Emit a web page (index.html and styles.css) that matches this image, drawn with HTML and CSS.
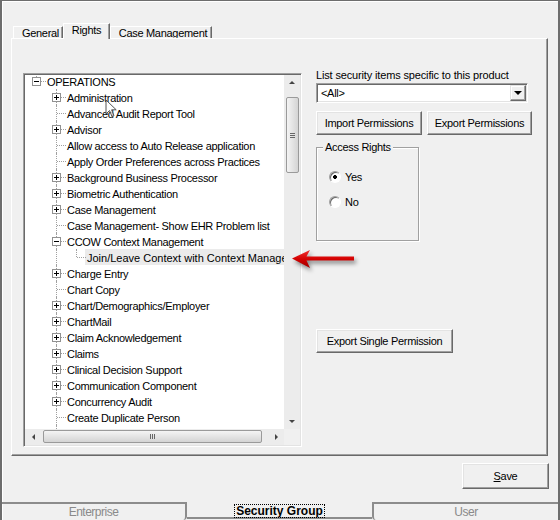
FILE: index.html
```html
<!DOCTYPE html>
<html lang="en">
<head>
    <meta charset="UTF-8">
    <title>Security Group</title>
    <link rel="stylesheet" href="styles.css">
</head>
<body>
    <div class="window">
        <div class="tabs">
            <div class="tab tab-general">General</div>
            <div class="tab tab-rights active">Rights</div>
            <div class="tab tab-case">Case Management</div>
        </div>

        <div class="panel">
            <div class="tree">
                <div class="viewport">
                    <div class="row first"><span class="g end"><i class="box"></i></span><span class="txt">OPERATIONS</span></div>
                    <div class="row"><span class="g"></span><span class="g tee"><i class="box plus"></i></span><span class="txt">Administration</span></div>
                    <div class="row"><span class="g"></span><span class="g tee"></span><span class="txt">Advanced Audit Report Tool</span></div>
                    <div class="row"><span class="g"></span><span class="g tee"><i class="box plus"></i></span><span class="txt">Advisor</span></div>
                    <div class="row"><span class="g"></span><span class="g tee"></span><span class="txt">Allow access to Auto Release application</span></div>
                    <div class="row"><span class="g"></span><span class="g tee"></span><span class="txt">Apply Order Preferences across Practices</span></div>
                    <div class="row"><span class="g"></span><span class="g tee"><i class="box plus"></i></span><span class="txt">Background Business Processor</span></div>
                    <div class="row"><span class="g"></span><span class="g tee"><i class="box plus"></i></span><span class="txt">Biometric Authentication</span></div>
                    <div class="row"><span class="g"></span><span class="g tee"><i class="box plus"></i></span><span class="txt">Case Management</span></div>
                    <div class="row"><span class="g"></span><span class="g tee"></span><span class="txt">Case Management- Show EHR Problem list</span></div>
                    <div class="row"><span class="g"></span><span class="g tee"><i class="box"></i></span><span class="txt">CCOW Context Management</span></div>
                    <div class="row"><span class="g"></span><span class="g bar"></span><span class="g end"></span><span class="txt sel">Join/Leave Context with Context Manager</span></div>
                    <div class="row"><span class="g"></span><span class="g tee"><i class="box plus"></i></span><span class="txt">Charge Entry</span></div>
                    <div class="row"><span class="g"></span><span class="g tee"></span><span class="txt">Chart Copy</span></div>
                    <div class="row"><span class="g"></span><span class="g tee"><i class="box plus"></i></span><span class="txt">Chart/Demographics/Employer</span></div>
                    <div class="row"><span class="g"></span><span class="g tee"><i class="box plus"></i></span><span class="txt">ChartMail</span></div>
                    <div class="row"><span class="g"></span><span class="g tee"><i class="box plus"></i></span><span class="txt">Claim Acknowledgement</span></div>
                    <div class="row"><span class="g"></span><span class="g tee"><i class="box plus"></i></span><span class="txt">Claims</span></div>
                    <div class="row"><span class="g"></span><span class="g tee"><i class="box plus"></i></span><span class="txt">Clinical Decision Support</span></div>
                    <div class="row"><span class="g"></span><span class="g tee"><i class="box plus"></i></span><span class="txt">Communication Component</span></div>
                    <div class="row"><span class="g"></span><span class="g tee"><i class="box plus"></i></span><span class="txt">Concurrency Audit</span></div>
                    <div class="row"><span class="g"></span><span class="g tee"></span><span class="txt">Create Duplicate Person</span></div>
                    <div class="row"><span class="g"></span><span class="g bar"></span></div>
                </div>
                <div class="vscroll">
                    <span class="sbtn"><i class="tri up"></i></span>
                    <span class="vtrack"><span class="vthumb"><i class="grip-h"></i></span></span>
                    <span class="sbtn"><i class="tri down"></i></span>
                </div>
                <div class="hscroll">
                    <span class="sbtn"><i class="tri left"></i></span>
                    <span class="htrack"><span class="hthumb"><i class="grip-v"></i></span></span>
                    <span class="sbtn"><i class="tri right"></i></span>
                </div>
                <div class="corner"></div>
            </div>

            <div class="side">
                <div class="label">List security items specific to this product</div>
                <div class="combo">
                    <span class="combo-text">&lt;All&gt;</span>
                    <span class="combo-btn"><i class="tri down big"></i></span>
                </div>
                <div class="btn-row">
                    <button class="btn btn-import">Import Permissions</button>
                    <button class="btn btn-export">Export Permissions</button>
                </div>
                <fieldset class="group">
                    <legend>Access Rights</legend>
                    <div class="radio-row first"><span class="radio checked"></span>Yes</div>
                    <div class="radio-row"><span class="radio"></span>No</div>
                </fieldset>
                <button class="btn btn-single">Export Single Permission</button>
            </div>
        </div>

        <div class="save-row">
            <button class="btn btn-save"><u>S</u>ave</button>
        </div>

        <div class="btabs">
            <div class="btab btab-left">Enterprise</div>
            <div class="btab btab-on"><span class="focus">Security Group</span></div>
            <div class="btab btab-right">User</div>
        </div>

        <svg class="cursor" width="14" height="20" viewBox="0 0 14 20">
            <path d="M1 1 L1 15 L4.5 11.5 L7 17.5 L9 16.6 L6.6 10.8 L11.2 10.8 Z" fill="#fff" fill-opacity="0.7" stroke="#555" stroke-width="1"/>
        </svg>

        <svg class="pointer" width="80" height="34" viewBox="0 0 80 34">
            <defs>
                <linearGradient id="red" x1="0" y1="0" x2="0" y2="1">
                    <stop offset="0" stop-color="#f03030"/>
                    <stop offset="0.5" stop-color="#d40000"/>
                    <stop offset="1" stop-color="#a00000"/>
                </linearGradient>
            </defs>
            <path d="M3 12.5 L21 4 L17.5 10.5 L65 10.5 L65 14.5 L17.5 14.5 L21 22 Z" fill="url(#red)"/>
        </svg>
    </div>
</body>
</html>
```

FILE: styles.css
```css
* {
    box-sizing: border-box;
}

body {
    margin: 0;
    background: #f0f0f0;
    font-family: "Liberation Sans", Arial, sans-serif;
    font-size: 11px;
    letter-spacing: -0.3px;
    color: #000;
}

.window {
    position: relative;
    width: 560px;
    height: 520px;
    overflow: hidden;
    display: flex;
    flex-direction: column;
    border-top: 1px solid #6d6d6d;
    border-left: 2px solid #6d6d6d;
    border-right: 2px solid #6d6d6d;
    box-shadow: inset 1px 1px 0 #fff;
}

/* top tabs */
.tabs {
    display: flex;
    align-items: flex-end;
    height: 15px;
    margin: 22px 0 0 11px;
}

.tab {
    height: 12px;
    line-height: 12px;
    text-align: center;
    border-top: 1px solid #fff;
    border-left: 1px solid #fff;
    border-right: 1px solid #696969;
    box-shadow: inset -1px 0 0 #a0a0a0;
    background: #f0f0f0;
}

.tab-general {
    width: 50px;
    padding-left: 5px;
}

.tab-rights {
    width: 47px;
}

.tab-case {
    width: 102px;
    padding-left: 4px;
}

.tab.active {
    position: relative;
    z-index: 1;
    height: 16px;
    line-height: 13px;
    margin-bottom: -1px;
}

.panel {
    display: flex;
    gap: 14px;
    width: 537px;
    height: 418px;
    margin-left: 9px;
    padding: 34px 0 0 11px;
    border-top: 1px solid #fff;
    border-left: 1px solid #fff;
    border-right: 1px solid #696969;
    border-bottom: 1px solid #696969;
    box-shadow: inset -1px -1px 0 #a0a0a0;
}

/* tree view */
.tree {
    flex: none;
    width: 279px;
    height: 374px;
    display: grid;
    grid-template-columns: 1fr 16px;
    grid-template-rows: 1fr 16px;
    border: 1px solid;
    border-color: #a0a0a0 #fff #fff #a0a0a0;
    box-shadow: inset 1px 1px 0 #696969, inset -1px -1px 0 #e3e3e3;
    padding: 1px;
}

.viewport {
    background: #fff;
    overflow: hidden;
}

.row {
    display: flex;
    height: 16px;
    line-height: 16px;
    padding-left: 1px;
    white-space: nowrap;
}

.row.first {
    margin-top: -2px;
}

.g {
    position: relative;
    flex: none;
    width: 20px;
    height: 16px;
}

.tee::before,
.bar::before,
.end::before {
    content: "";
    position: absolute;
    left: 10px;
    top: 0;
    height: 16px;
    border-left: 1px dotted #a0a0a0;
}

.end::before {
    height: 8px;
}

.tee::after,
.end::after {
    content: "";
    position: absolute;
    left: 11px;
    top: 8px;
    width: 9px;
    border-top: 1px dotted #a0a0a0;
}

.box {
    position: relative;
    z-index: 1;
    display: block;
    width: 9px;
    height: 9px;
    margin: 4px 0 0 6px;
    border: 1px solid #919191;
    background: linear-gradient(#000, #000) center / 5px 1px no-repeat, #fff;
}

.box.plus {
    background: linear-gradient(#000, #000) center / 5px 1px no-repeat,
        linear-gradient(#000, #000) center / 1px 5px no-repeat, #fff;
}

.txt {
    height: 16px;
    padding: 1px 1px 0;
}

.txt.sel {
    margin-left: -1px;
    padding: 1px 2px 0;
    background: #ebebeb;
    letter-spacing: 0;
}

/* scrollbars */
.vscroll,
.hscroll {
    display: flex;
    background: #ececec;
}

.vscroll {
    flex-direction: column;
}

.sbtn {
    flex: none;
    width: 16px;
    height: 16px;
    display: flex;
    align-items: center;
    justify-content: center;
}

.tri {
    width: 0;
    height: 0;
    border: 3px solid transparent;
}

.tri.up {
    border-top: 0;
    border-bottom-color: #444;
    margin-bottom: 1px;
}

.tri.down {
    border-bottom: 0;
    border-top-color: #444;
}

.tri.left {
    border-left: 0;
    border-right-color: #444;
}

.tri.right {
    border-right: 0;
    border-left-color: #444;
}

.vtrack,
.htrack {
    flex: 1;
    display: flex;
}

.vthumb {
    width: 13px;
    height: 76px;
    margin: 6px 0 0 2px;
    border: 1px solid #9a9a9a;
    border-radius: 2px;
    background: linear-gradient(to right, #f4f4f4, #e4e4e4 50%, #d4d4d4);
    display: flex;
    align-items: center;
    justify-content: center;
}

.grip-h {
    width: 5px;
    height: 5px;
    background: repeating-linear-gradient(#666 0 1px, transparent 1px 2px);
}

.hthumb {
    width: 219px;
    height: 13px;
    margin: 1px 0 0 2px;
    border: 1px solid #9a9a9a;
    border-radius: 2px;
    background: linear-gradient(#f4f4f4, #e4e4e4 50%, #d4d4d4);
    display: flex;
    align-items: center;
    justify-content: center;
}

.grip-v {
    width: 5px;
    height: 5px;
    background: repeating-linear-gradient(to right, #666 0 1px, transparent 1px 2px);
}

.corner {
    background: #f0f0f0;
}

/* right side controls */
.side {
    display: flex;
    flex-direction: column;
    align-items: flex-start;
    margin-top: -4px;
}

.label {
    line-height: 13px;
    letter-spacing: -0.15px;
}

.combo {
    display: flex;
    align-items: center;
    width: 212px;
    height: 20px;
    margin-top: 1px;
    padding: 1px;
    border: 1px solid;
    border-color: #a0a0a0 #fff #fff #a0a0a0;
    box-shadow: inset 1px 1px 0 #696969, inset -1px -1px 0 #e3e3e3;
    background: #fff;
}

.combo-text {
    flex: 1;
    padding-left: 3px;
}

.combo-btn {
    width: 16px;
    height: 16px;
    display: flex;
    align-items: center;
    justify-content: center;
    background: #f0f0f0;
    border: 1px solid;
    border-color: #e3e3e3 #696969 #696969 #e3e3e3;
    box-shadow: inset -1px -1px 0 #a0a0a0, inset 1px 1px 0 #fff;
}

.tri.big {
    border-width: 4px 4px 0 4px;
    border-top-color: #000;
}

.btn {
    font: inherit;
    letter-spacing: inherit;
    color: #000;
    background: #f0f0f0;
    padding: 0;
    border: 1px solid;
    border-color: #fff #696969 #696969 #fff;
    box-shadow: inset -1px -1px 0 #a0a0a0, inset 1px 1px 0 #e3e3e3;
    height: 24px;
}

.btn-row {
    display: flex;
    gap: 5px;
    margin-top: 8px;
}

.btn-import {
    width: 106px;
}

.btn-export {
    width: 105px;
}

.group {
    width: 103px;
    margin: 6px 0 0;
    padding: 0 0 30px 6px;
    border: 1px solid #a0a0a0;
    box-shadow: inset 1px 1px 0 #fff, 1px 1px 0 #fff;
}

.group legend {
    padding: 0 2px;
    line-height: 13px;
    background: #f0f0f0;
}

.radio-row {
    display: flex;
    align-items: center;
    gap: 4px;
    height: 16px;
    margin-top: 9px;
    padding-left: 6px;
}

.radio-row.first {
    margin-top: 15px;
}

.radio {
    width: 12px;
    height: 12px;
    border-radius: 50%;
    border: 1px solid;
    border-color: #a0a0a0 #fff #fff #a0a0a0;
    box-shadow: inset 1px 1px 0 #696969;
    background: #fff;
}

.radio.checked {
    background: radial-gradient(circle, #000 0 1.6px, #fff 2.2px);
}

.btn-single {
    width: 137px;
    margin-top: 88px;
}

/* save */
.save-row {
    display: flex;
    justify-content: flex-end;
    margin: 7px 9px 0 0;
}

.btn-save {
    width: 87px;
    height: 26px;
}

/* bottom tabs */
.btabs {
    display: flex;
    height: 18px;
    margin-top: 13px;
    font-size: 12px;
    letter-spacing: -0.5px;
}

.btab {
    text-align: center;
    color: #8a8a8a;
    line-height: 16px;
}

.btab-left {
    width: 185px;
    border-top: 2px solid #8c8c8c;
    border-right: 2px solid #8c8c8c;
    border-bottom-right-radius: 4px;
}

.btab-on {
    width: 185px;
    height: 17px;
    padding-top: 3px;
    border-bottom: 2px solid #8c8c8c;
}

.focus {
    display: inline-block;
    height: 12px;
    line-height: 13px;
    overflow: hidden;
    padding: 0 1px;
    outline: 1px dotted #000;
    color: #000;
    font-weight: bold;
    font-size: 12px;
    letter-spacing: 0;
}

.btab-right {
    flex: 1;
    border-top: 2px solid #8c8c8c;
    border-left: 2px solid #8c8c8c;
    border-bottom-left-radius: 4px;
}

/* overlays */
.cursor {
    position: absolute;
    left: 103px;
    top: 98px;
}

.pointer {
    position: absolute;
    left: 287px;
    top: 245px;
    filter: drop-shadow(2px 3px 2px rgba(0, 0, 0, 0.45));
}
```
